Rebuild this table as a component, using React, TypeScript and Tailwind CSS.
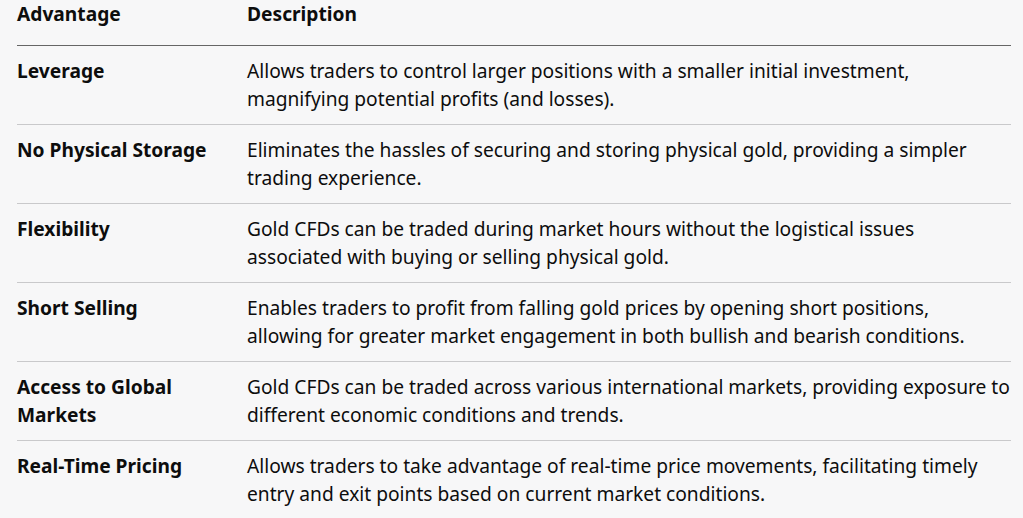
import React from 'react';

// descriptions keep the reference's line breaks where the fallback font would wrap differently
const rows = [
  {
    advantage: 'Leverage',
    description:
      'Allows traders to control larger positions with a smaller initial investment, magnifying potential profits (and losses).',
  },
  {
    advantage: 'No Physical Storage',
    description:
      'Eliminates the hassles of securing and storing physical gold, providing a simpler trading experience.',
  },
  {
    advantage: 'Flexibility',
    description:
      'Gold CFDs can be traded during market hours without the logistical issues associated with buying or selling physical gold.',
  },
  {
    advantage: 'Short Selling',
    description:
      'Enables traders to profit from falling gold prices by opening short positions,\nallowing for greater market engagement in both bullish and bearish conditions.',
  },
  {
    advantage: 'Access to Global Markets',
    description:
      'Gold CFDs can be traded across various international markets, providing exposure to different economic conditions and trends.',
  },
  {
    advantage: 'Real-Time Pricing',
    description:
      'Allows traders to take advantage of real-time price movements, facilitating timely entry and exit points based on current market conditions.',
  },
];

export default function App() {
  return (
    <div className="min-h-screen bg-[#f7f7f8] pl-[17px] pr-[12px] text-[#0d0d0d] font-['Noto_Sans',sans-serif] text-[19.2px] leading-[28px]">
      <table className="w-full border-collapse">
        <thead>
          <tr className="border-b border-[#666]">
            <th className="w-[230px] text-left font-bold align-top pb-[17px]">Advantage</th>
            <th className="text-left font-bold align-top pb-[17px]">Description</th>
          </tr>
        </thead>
        <tbody>
          {rows.map((row) => (
            <tr key={row.advantage} className="border-b border-[#c9c9cb]">
              <td className="font-bold align-top py-[11px] pr-4">{row.advantage}</td>
              <td className="align-top py-[11px] whitespace-pre-line">{row.description}</td>
            </tr>
          ))}
        </tbody>
      </table>
    </div>
  );
}
